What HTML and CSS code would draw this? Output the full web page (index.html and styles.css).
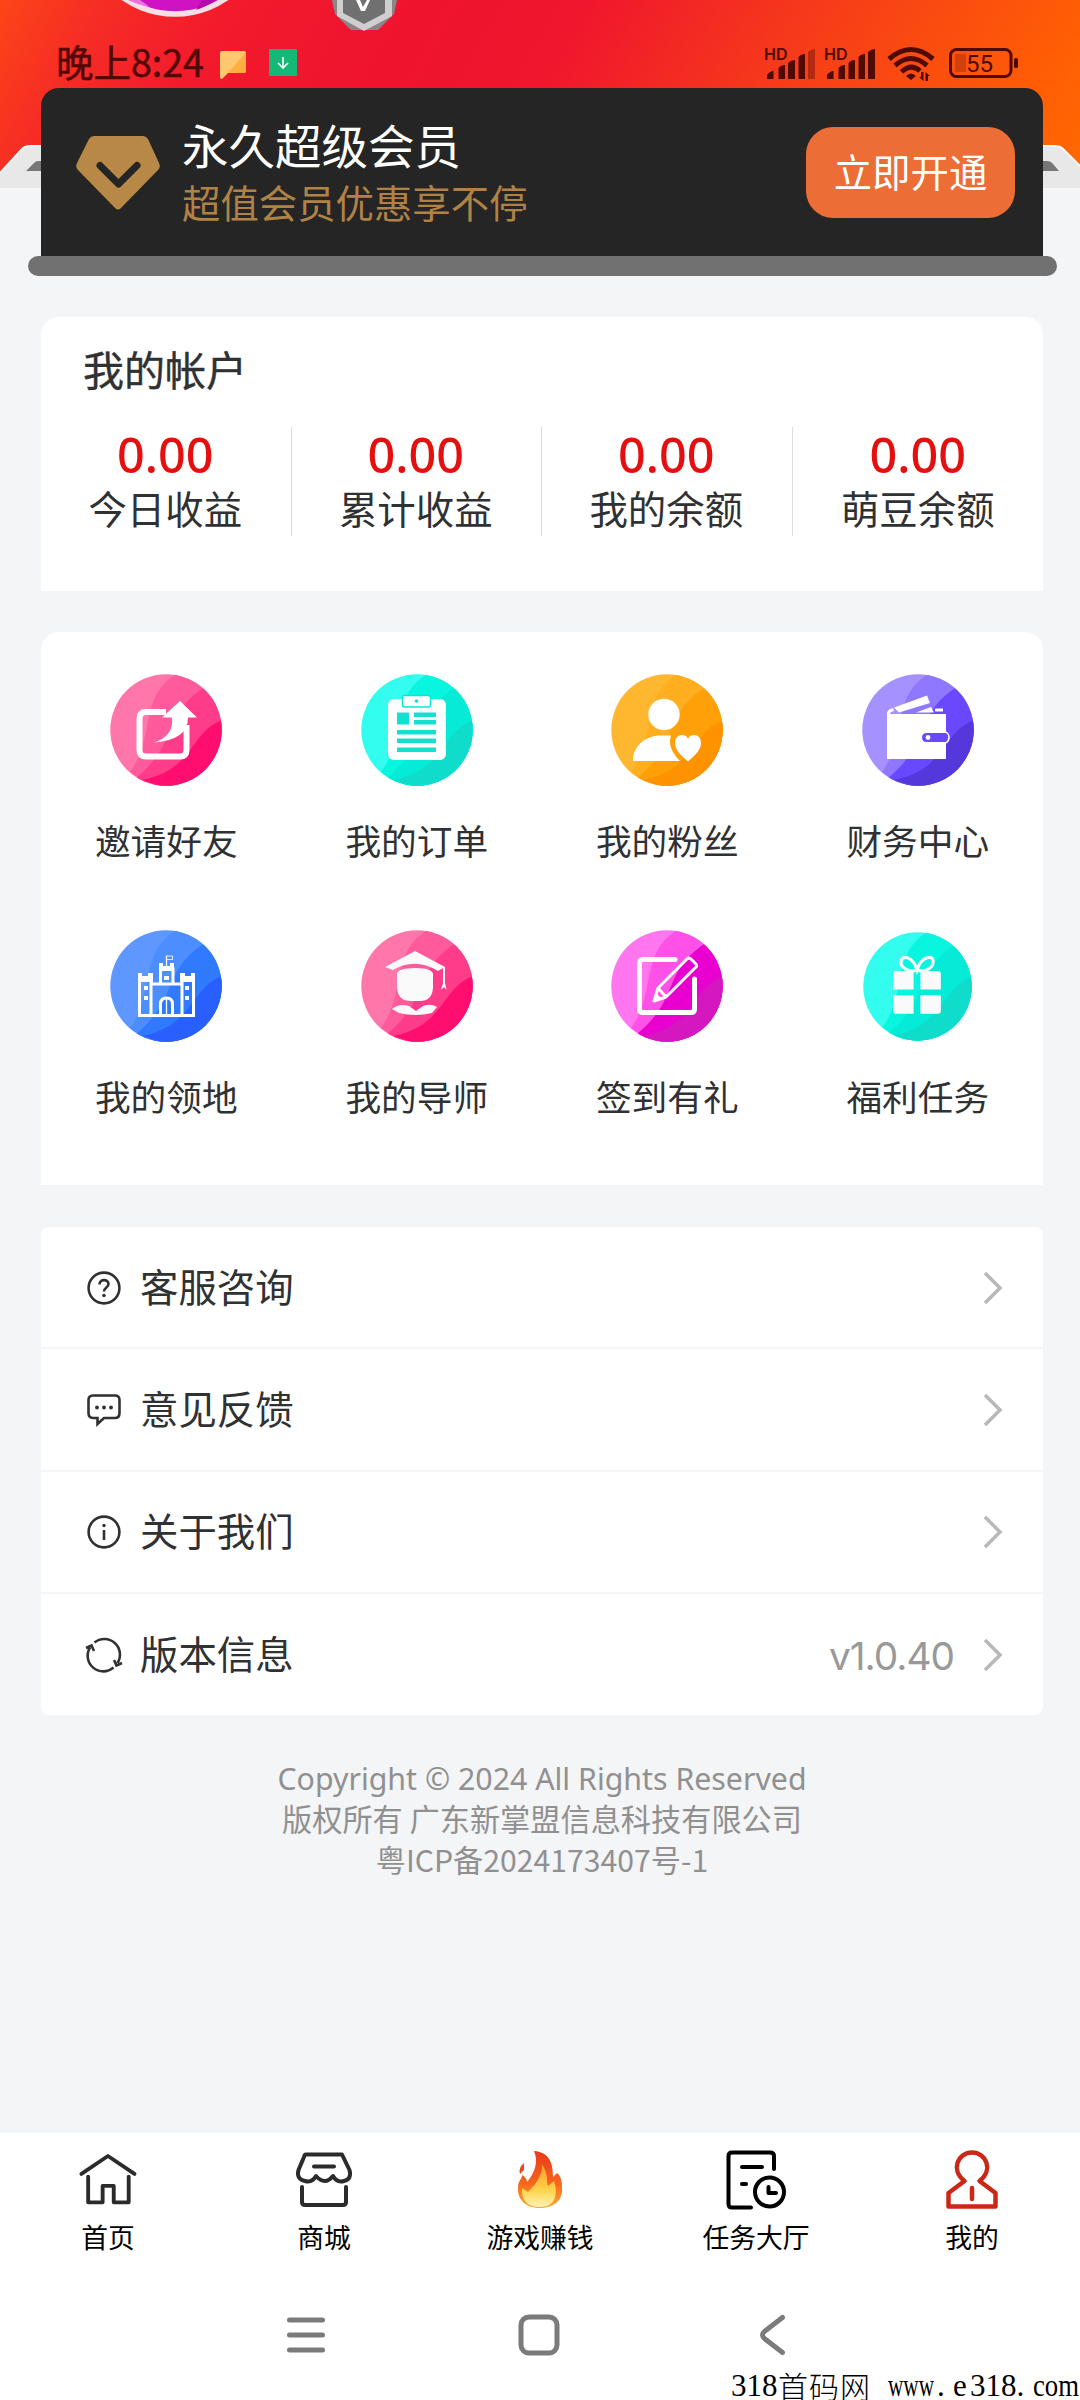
FILE: index.html
```html
<!DOCTYPE html>
<html lang="zh-CN">
<head>
<meta charset="utf-8">
<title>我的</title>
<link rel="stylesheet" href="styles.css">
</head>
<body>
<svg class="defs" width="0" height="0">
  <defs>
    <clipPath id="disc"><circle cx="56" cy="56" r="55.7"/></clipPath>
    <path id="w1" d="M66 0C28 24 46 62 20 98L40 112H112V0Z"/>
    <path id="w2" d="M96 12C50 42 70 68 26 104L40 112H112V0Z"/>
    <path id="w3" d="M112 46C80 58 84 96 32 106L50 112H112Z"/>
    <linearGradient id="hero" gradientUnits="userSpaceOnUse" x1="0" y1="0" x2="901" y2="495">
      <stop offset="0" stop-color="#fc4518"/><stop offset=".09" stop-color="#f62c25"/><stop offset=".2" stop-color="#f21a2c"/><stop offset=".36" stop-color="#ef132f"/><stop offset=".5" stop-color="#f0162d"/><stop offset=".72" stop-color="#f73e18"/><stop offset=".92" stop-color="#ff5c06"/><stop offset="1" stop-color="#ff6900"/>
    </linearGradient>
    <linearGradient id="flame" x1="0" y1="0" x2="0" y2="1">
      <stop offset="0" stop-color="#e8391c"/><stop offset=".55" stop-color="#f7641c"/><stop offset="1" stop-color="#ffab2e"/>
    </linearGradient>
    <linearGradient id="core" x1="0" y1="0" x2="0" y2="1">
      <stop offset="0" stop-color="#ff9a2b"/><stop offset=".6" stop-color="#ffd34a"/><stop offset="1" stop-color="#fff3b5"/>
    </linearGradient>
  </defs>
</svg>
<div class="page">
  <svg class="hero-art" viewBox="0 0 1080 190">
    <path d="M0 0H1080V172H0Z" fill="url(#hero)"/>
    <path d="M0 173L22 149Q25 146 30 146H1055Q1060 146 1063 149L1080 166V188H0Z" fill="#e8e8e8"/>
    <path d="M0 173L22 149Q25 146 30 146H60M1030 146H1055Q1060 146 1063 149L1080 166" fill="none" stroke="#f5f5f5" stroke-width="2"/>
    <path d="M26 171L35 162Q36 161 39 161H1047Q1051 161 1053 164L1059 171Z" fill="#777"/>
    <circle cx="175" cy="-77" r="91" fill="#cf12c2" stroke="#f5dfe6" stroke-width="5.5"/>
    <path d="M128 0H140L150 7Q138 5 128 0Z" fill="#ee70df"/><path d="M196 10Q208 6 216 0H202Z" fill="#b408a8"/>
    <path d="M332 0H397L394 14 378 30H351L335 14Z" fill="#8b8585"/>
    <path d="M337 0H392V16L364 31 337 16Z" fill="#cfcfcf"/><path d="M343 0H385V13L364 24 343 13Z" fill="#707070"/>
    <path d="M356 0H360L363 7 367 0H370L365 11H361Z" fill="#fff"/>
  </svg>

  <header class="status">
    <span class="clock">晚上8:24</span>
    <svg class="flag" viewBox="0 0 26 28"><path d="M2 0H24Q26 0 26 2V20Q26 22 24 22H8L2 28Q0 28 0 26V2Q0 0 2 0Z" fill="#ffc86f"/><path d="M26 1V20Q26 22 24 22H8Z" fill="#ffaf3f"/></svg>
    <svg class="download" viewBox="0 0 28 27"><rect width="28" height="27" rx="1" fill="#14b877"/><path d="M14 8V19M9 14L14 19 19 14" fill="none" stroke="#fff" stroke-width="1.6"/></svg>
    <svg class="signals" viewBox="765 44 256 40" fill="#4f0a04">
      <g class="hd"><text x="764" y="59.5">HD</text><text x="824" y="59.5">HD</text></g>
      <path d="M767 79V75Q770 71 773.500 71V79ZM778.500 79V68Q781 65 785 65V79ZM788 79V63Q791 60 795 60V79ZM798.500 79V57Q801 54 805 54V79Z"/>
      <path d="M808 79V52Q811 49 815 49V79Z" opacity=".4"/>
      <path d="M827 79V75Q830 71 833.500 71V79ZM838.500 79V68Q841 65 845 65V79ZM848.500 79V63Q851 60 855 60V79ZM858.500 79V57Q861 54 865 54V79ZM868 79V52Q871 49 875 49V79Z"/>
      <g fill="none" stroke="#4f0a04" stroke-width="5"><path d="M889 59Q911 40 933 59"/><path d="M895 65.500Q911 51.500 927 65.500"/><path d="M901.500 72Q911 63 920 71"/></g>
      <path d="M906 76Q911 71 916 76L911 80ZM921 72H923.500V81L919 77H921ZM925.500 81V72L930 76H928V81ZM930 72"/>
      <rect x="950.500" y="49.500" width="60.500" height="27" rx="6" fill="none" stroke="#4f0a04" stroke-width="3"/>
      <path d="M955 54H966V72H955Z" opacity=".25"/><rect x="1014" y="58" width="4" height="10" rx="1.500"/>
      <text class="pct" x="966" y="71.500">55</text>
    </svg>
  </header>

  <section class="vip">
    <svg class="gem" viewBox="0 0 84 74"><path d="M18 0H67Q70 0 72 3L83 27Q85 31 82 34L45 72Q42 75 39 72L2 34Q-1 31 1 27L13 3Q15 0 18 0Z" fill="#b78846"/><path d="M24 29.500L42.500 48 61 29.500" fill="none" stroke="#252525" stroke-width="7" stroke-linecap="round" stroke-linejoin="round"/></svg>
    <div class="vip-copy"><div class="vip-title">永久超级会员</div><div class="vip-sub">超值会员优惠享不停</div></div>
    <button class="open">立即开通</button>
  </section>
  <div class="rail"></div>

  <section class="account">
    <h2>我的帐户</h2>
    <div class="stats">
      <div class="stat"><b>0.00</b><span>今日收益</span></div>
      <div class="stat"><b>0.00</b><span>累计收益</span></div>
      <div class="stat"><b>0.00</b><span>我的余额</span></div>
      <div class="stat"><b>0.00</b><span>萌豆余额</span></div>
    </div>
  </section>

  <section class="services">
    <div class="service"><svg class="badge" viewBox="0 0 112 112">
      <g clip-path="url(#disc)"><rect width="112" height="112" fill="#ff76aa"/><use href="#w1" fill="#ff5b9c"/><use href="#w2" fill="#ff3c89"/><use href="#w3" fill="#ff0e70"/></g>
      <path d="M56 38H36Q29.500 38 29.500 44.500V76Q29.500 82.500 36 82.500H70Q76.500 82.500 76.500 76V51" fill="none" stroke="#fff" stroke-width="6"/>
      <path d="M70 27L87 43.500H78Q78 66 44 68.500Q64 62 62 43.500H52Z" fill="#fff"/></svg><span>邀请好友</span></div>
    <div class="service"><svg class="badge" viewBox="0 0 112 112">
      <g clip-path="url(#disc)"><rect width="112" height="112" fill="#33fdee"/><use href="#w1" fill="#08f5e0"/><use href="#w2" fill="#06ebd8"/><use href="#w3" fill="#10dccb"/></g>
      <rect x="27" y="25" width="58" height="61" rx="6" fill="#fff"/><rect x="41.500" y="21.500" width="28" height="11.500" rx="2" fill="#fff" stroke="#0ce5d3" stroke-width="1.500"/><circle cx="55.500" cy="27" r="1.800" fill="#0ce5d3"/>
      <path d="M36 38.500H48V50.500H36ZM53 38.500H75V43H53ZM53 46H75V50.500H53ZM36 56H75V60.500H36ZM36 64.500H75V69H36ZM36 73.500H75V78H36Z" fill="#14dfd0"/></svg><span>我的订单</span></div>
    <div class="service"><svg class="badge" viewBox="0 0 112 112">
      <g clip-path="url(#disc)"><rect width="112" height="112" fill="#ffb730"/><use href="#w1" fill="#ffae20"/><use href="#w2" fill="#ffa008"/><use href="#w3" fill="#ff9200"/></g>
      <circle cx="53" cy="40.500" r="15.700" fill="#fff"/><path d="M22 87C22 72 34 61.500 50 61.500H60C57 70 61 79 69 87ZM77 64.500C80 59 90 60 90 69C90 77 82 83 77 87.500C72 83 64 77 64 69C64 60 74 59 77 64.500Z" fill="#fff"/></svg><span>我的粉丝</span></div>
    <div class="service"><svg class="badge" viewBox="0 0 112 112">
      <g clip-path="url(#disc)"><rect width="112" height="112" fill="#a591ff"/><use href="#w1" fill="#8f77ff"/><use href="#w2" fill="#6949ff"/><use href="#w3" fill="#5438db"/></g>
      <path d="M25 42Q24 35 31 34L32 37Q28 38 28 40H84V59H65Q60 59 60 63.500T65 68H84V85H25ZM32 33.500L65 21.500 68 29 37 38.500ZM54 38.500L69 33 72 38.500ZM73 34.500H81V37.500H73Z" fill="#fff"/><circle cx="66" cy="63.500" r="2.400" fill="#fff"/><path d="M84 58Q87 60 87 63.500T84 69" fill="none" stroke="#fff" stroke-width="1.500"/></svg><span>财务中心</span></div>
    <div class="service"><svg class="badge" viewBox="0 0 112 112">
      <g clip-path="url(#disc)"><rect width="112" height="112" fill="#5d97ff"/><use href="#w1" fill="#4c8eff"/><use href="#w2" fill="#307aff"/><use href="#w3" fill="#2a5fff"/></g>
      <g fill="none" stroke="#fff" stroke-width="3"><path d="M29.500 85.500V50H41V85.500M72 85.500V50H83.500V85.500M28 85.500H85M42 54H71M50.500 53V39H63V53M50.500 85V74Q50.500 68 56.500 68T62.500 74V85" /><path d="M56.500 69V84M56.500 38V25.500" stroke-width="1.300"/><path d="M57 26H62.500V29.500H57" stroke-width=".8"/></g>
      <path d="M28 43H32V46H38V43H43V52H28ZM70 43H75V46H81V43H85V52H70ZM49 33H53V36H60V33H64V41H49ZM34 56H38V60H34ZM34 66H38V70H34ZM75 56H79V60H75ZM75 66H79V70H75ZM54 46H59V50H54Z" fill="#fff"/></svg><span>我的领地</span></div>
    <div class="service"><svg class="badge" viewBox="0 0 112 112">
      <g clip-path="url(#disc)"><rect width="112" height="112" fill="#ff76aa"/><use href="#w1" fill="#ff5b9c"/><use href="#w2" fill="#ff3c89"/><use href="#w3" fill="#ff0e70"/></g>
      <path d="M24 37L54 21 84 37 77 41Q54 27 32 40ZM36 44Q37 38 54 38T72 44V58Q71 71 59 71H50Q37 71 36 58ZM31 79Q38 73 48 76L55 81 62 76Q70 73 76 77L71 83Q55 87 38 83ZM82 37H84V53L85.500 60 83 57 80 60 82 53Z" fill="#fafafa"/></svg><span>我的导师</span></div>
    <div class="service"><svg class="badge" viewBox="0 0 112 112">
      <g clip-path="url(#disc)"><rect width="112" height="112" fill="#ff76ef"/><use href="#w1" fill="#ff50e7"/><use href="#w2" fill="#e900d0"/><use href="#w3" fill="#d517bf"/></g>
      <g fill="none" stroke="#fff" stroke-linecap="round" stroke-linejoin="round"><path d="M64 29.500H32Q28.500 29.500 28.500 33V79Q28.500 82.500 32 82.500H80Q83.500 82.500 83.500 79V49" stroke-width="5"/><path d="M43 71L47 58 76 29Q78 27 81 30L84.500 33.500Q87 36 84 38L55 67ZM47 58L55 67" stroke-width="3"/></g><path d="M42 72L45 63 51 69Z" fill="#fff"/></svg><span>签到有礼</span></div>
    <div class="service"><svg class="badge small" viewBox="0 0 112 112">
      <g clip-path="url(#disc)"><rect width="112" height="112" fill="#33fdee"/><use href="#w1" fill="#08f5e0"/><use href="#w2" fill="#06ebd8"/><use href="#w3" fill="#10dccb"/></g>
      <path d="M34 40H52V59H31V43Q31 40 34 40ZM59 40H77Q80 40 80 43V59H59ZM31 65H52V84H34Q31 84 31 81ZM59 65H80V81Q80 84 77 84H59Z" fill="#fafafa"/><path d="M55.500 39C48 42 39 37 39 31C39 23 51 24 55.500 39C60 24 73 23 72 31C72 37 63 42 55.500 39Z" fill="none" stroke="#fafafa" stroke-width="3.200"/></svg><span>福利任务</span></div>
  </section>

  <section class="menu">
    <div class="row"><svg class="row-icon" viewBox="0 0 38 38"><circle cx="19" cy="19" r="15.400"/><path d="M14.500 15.500C14.500 9.500 23.500 10 23.500 15C23.500 18.500 19 18.500 19 22.500"/><circle class="dot" cx="19" cy="26.500" r="1.800"/></svg><span class="label">客服咨询</span><svg class="arrow" viewBox="0 0 20 34"><path d="M2 2L17 17 2 32"/></svg></div>
    <div class="row"><svg class="row-icon" viewBox="0 0 38 38"><path d="M8 4.500H30Q34.500 4.500 34.500 9V22Q34.500 27 30 27H19L12.500 33V27H8Q3.500 27 3.500 22V9Q3.500 4.500 8 4.500Z"/><g class="dot"><circle cx="12" cy="16.500" r="1.900"/><circle cx="19" cy="16.500" r="1.900"/><circle cx="26" cy="16.500" r="1.900"/></g></svg><span class="label">意见反馈</span><svg class="arrow" viewBox="0 0 20 34"><path d="M2 2L17 17 2 32"/></svg></div>
    <div class="row"><svg class="row-icon" viewBox="0 0 38 38"><circle cx="19" cy="19" r="15.400"/><path d="M19 17V27"/><circle class="dot" cx="19" cy="12.500" r="1.700"/></svg><span class="label">关于我们</span><svg class="arrow" viewBox="0 0 20 34"><path d="M2 2L17 17 2 32"/></svg></div>
    <div class="row"><svg class="row-icon" viewBox="0 0 38 38"><path d="M9.500 6.500A15.600 15.600 0 0 1 32.500 27M28.500 31.500A15.600 15.600 0 0 1 5 11.500M1 12L6.500 9.500 9 15M29 24L31.500 29.500 37 27"/></svg><span class="label">版本信息</span><span class="version">v1.0.40</span><svg class="arrow" viewBox="0 0 20 34"><path d="M2 2L17 17 2 32"/></svg></div>
  </section>

  <footer class="copyright">
    <p class="en">Copyright © 2024 All Rights Reserved</p>
    <p>版权所有 广东新掌盟信息科技有限公司</p>
    <p class="icp">粤ICP备2024173407号-1</p>
  </footer>

  <nav class="tabs">
    <div class="tab"><svg viewBox="0 0 60 60"><path d="M2.500 18L30 -.5 57.500 18M9.500 21V47.500H24.500V30.500H36V47.500H51.500V21" transform="translate(1 6.500) scale(.965)"/></svg><span>首页</span></div>
    <div class="tab"><svg viewBox="0 0 60 60"><path d="M12 4.500H48L55.500 20Q58 29 50 31Q43 33 39 26Q31 36 22 26Q18 33 11 31Q2 29 4.500 20L10 7Q10.500 4.500 12 4.500ZM20 16.500H40M8 37V52Q8 55 11 55H49Q52 55 52 52V37"/></svg><span>商城</span></div>
    <div class="tab"><svg class="fire" viewBox="0 0 60 60"><path d="M24 1C38 2 43 11 43 27L47 23Q52 26 52 38C53 49 45 58 30 58C15 58 7 49 8 37C8 31 12 29 12 25Q17 28 17 32C24 24 29 12 24 1Z" fill="url(#flame)"/><path d="M32 14C39 25 36 31 38 36L44 31C49 46 44 57 30 57C17 57 11 50 12 38L18 42C24 36 33 26 32 14Z" fill="url(#core)"/><path d="M14 13V20L10 24Q8 18 14 13Z" fill="#e8491c"/></svg><span>游戏赚钱</span></div>
    <div class="tab task"><svg viewBox="0 0 60 60"><path d="M25 57.500H6Q2.500 57.500 2.500 54V6Q2.500 2.500 6 2.500H44Q48 2.500 48 6V19M16 17H36M16 34H20"/><circle cx="43.500" cy="42" r="14.500"/><path d="M42.500 37V43H50"/></svg><span>任务大厅</span></div>
    <div class="tab me"><svg viewBox="0 0 60 60"><path d="M22.500 31C8 20 16 2.500 30 2.500S52 20 37.500 31L53.500 43V56.500H6.500V43ZM30 38V49"/></svg><span>我的</span></div>
  </nav>
  <div class="system">
    <svg class="keys" viewBox="0 0 1080 60"><path d="M289.500 20H322.500M289.500 35H322.500M289.500 50H322.500M782.500 17.500L765 31Q760 35 765 39L782.500 52.500"/><rect x="521" y="17" width="36" height="36" rx="8"/></svg>
    <svg class="mark" viewBox="730 0 350 32"><text x="731" y="25">318</text><text class="cn" x="778" y="27" textLength="92">首码网</text><text x="888" y="25" textLength="46" lengthAdjust="spacingAndGlyphs">www</text><text x="937" y="25">.</text><text x="953" y="25">e</text><text x="970" y="25">318.</text><text x="1033" y="25" textLength="46" lengthAdjust="spacingAndGlyphs">com</text></svg>
  </div>
</div>
</body>
</html>
```
FILE: styles.css
```css
* { box-sizing: border-box; }
body { margin: 0; font-family: "Noto Sans CJK SC", sans-serif; color: #303133; }
h2, p { margin: 0; font-weight: 400; }
svg { display: block; flex: none; overflow: visible; }
.defs { position: absolute; }
.page { position: relative; width: 1080px; height: 2400px; display: flex; flex-direction: column; background: #f4f5f7; overflow: hidden; white-space: nowrap; }
.hero-art { position: absolute; top: 0; left: 0; width: 1080px; height: 190px; }

.status { position: relative; height: 88px; padding: 36px 59px 0 56px; display: flex; align-items: center; }
.clock { width: 164px; font-size: 37.500px; line-height: 52px; color: #520606; margin-top: -2px; -webkit-text-stroke: .5px #520606; }
.flag { width: 26px; height: 28px; margin-top: 5px; }
.download { width: 28px; height: 27px; margin: 1px 0 0 23px; }
.signals { width: 256px; height: 40px; margin: 4px 0 0 auto; }
.hd { font: 600 16px Inter, sans-serif; }
.pct { font: 24px Roboto, sans-serif; }

.vip { position: relative; height: 168px; margin: 0 37px 0 41px; padding: 0 28px 0 35px; display: flex; align-items: center; background: #252525; border-radius: 18px 18px 0 0; }
.gem { width: 84px; height: 74px; margin-top: 2px; }
.vip-copy { margin-left: 22px; margin-top: -3px; }
.vip-title { font-size: 46.500px; line-height: 60px; color: #fff; }
.vip-sub { font-size: 38.400px; line-height: 54px; color: #b08245; }
.open { width: 209px; height: 91px; margin: 0 0 0 auto; padding: 0 0 5px; border: 0; border-radius: 27px; background: #ec6d36; color: #fff; font: 38.400px "Noto Sans CJK SC", sans-serif; }
.rail { position: relative; height: 20px; margin: 0 23px 41px 28px; border-radius: 10px; background: #717171; flex: none; }

.account, .services, .menu { margin: 0 37px 0 41px; background: #fff; flex: none; }
.account { height: 274px; margin-bottom: 41px; border-radius: 18px 18px 0 0; }
.account h2 { padding: 21px 0 0 42px; font-size: 41px; line-height: 60px; -webkit-text-stroke: .4px #303133; }
.stats { display: grid; grid-template-columns: repeat(4, 1fr); margin-top: 29px; height: 109px; }
.stat { display: flex; flex-direction: column; align-items: center; border-right: 1.500px solid #dcdcdc; padding-right: 1px; }
.stat:last-child { border: 0; padding-right: 0; }
.stat b { font: 500 48.500px/54px "Noto Sans", sans-serif; color: #e60f0f; }
.stat span { font-size: 38.400px; line-height: 52px; }

.services { height: 553px; margin-bottom: 42px; padding-top: 42px; display: grid; grid-template-columns: repeat(4, 1fr); grid-auto-rows: 256px; border-radius: 18px 18px 0 0; }
.service { display: flex; flex-direction: column; align-items: center; }
.badge { width: 112px; height: 112px; }
.badge.small { width: 109px; height: 109px; margin: 2px 0 1px; }
.service span { font-size: 35.700px; line-height: 50px; margin-top: 29px; }

.menu { height: 488px; border-radius: 8px; }
.row { height: 122.300px; padding: 0 40px 3px 44px; display: flex; align-items: center; border-bottom: 2px solid #f4f5f6; }
.row:last-child { height: 121px; border: 0; }
.row-icon { width: 38px; height: 38px; fill: none; stroke: #303133; stroke-width: 2.600; margin-top: 4px; }
.dot { fill: #303133; stroke: none; }
.label { font-size: 38.400px; margin: -2px 0 0 17px; }
.arrow { width: 20px; height: 34px; margin: 4px 0 0 auto; fill: none; stroke: #b8b8b8; stroke-width: 3.500; }
.version { margin: 5px 0 0 auto; font: 38.800px Inter, sans-serif; letter-spacing: -1px; color: #999; }
.version + .arrow { margin-left: 29px; }

.copyright { margin-top: 42px; text-align: center; font-size: 30.200px; line-height: 41px; color: #909090; padding-left: 4px; }
.copyright .en { font-family: "Noto Sans", sans-serif; font-size: 30.300px; line-height: 43px; }
.copyright p { height: 41px; }

.tabs { height: 150px; margin-top: auto; padding-top: 17px; display: grid; grid-template-columns: repeat(5, 1fr); background: #fff; flex: none; }
.tab { display: flex; flex-direction: column; align-items: center; color: #000; }
.tab svg { width: 60px; height: 60px; fill: none; stroke: #2b2b2b; stroke-width: 4; stroke-linecap: round; stroke-linejoin: round; }
.tab .fire { stroke: none; }
.tab.task svg { stroke: #000; }
.tab.me svg { stroke: #cb2719; stroke-width: 4.500; }
.tab span { font-size: 26.800px; line-height: 40px; margin-top: 7px; }
.system { height: 117px; background: #fff; padding-top: 17px; flex: none; }
.keys { width: 1080px; height: 60px; fill: none; stroke: #7b7b7b; stroke-width: 5; stroke-linecap: round; }
.mark { width: 350px; height: 32px; margin: 11px 0 0 auto; font: 31px "Liberation Serif", serif; }
.cn { font: 300 30px "Noto Sans CJK SC", sans-serif; }
```
